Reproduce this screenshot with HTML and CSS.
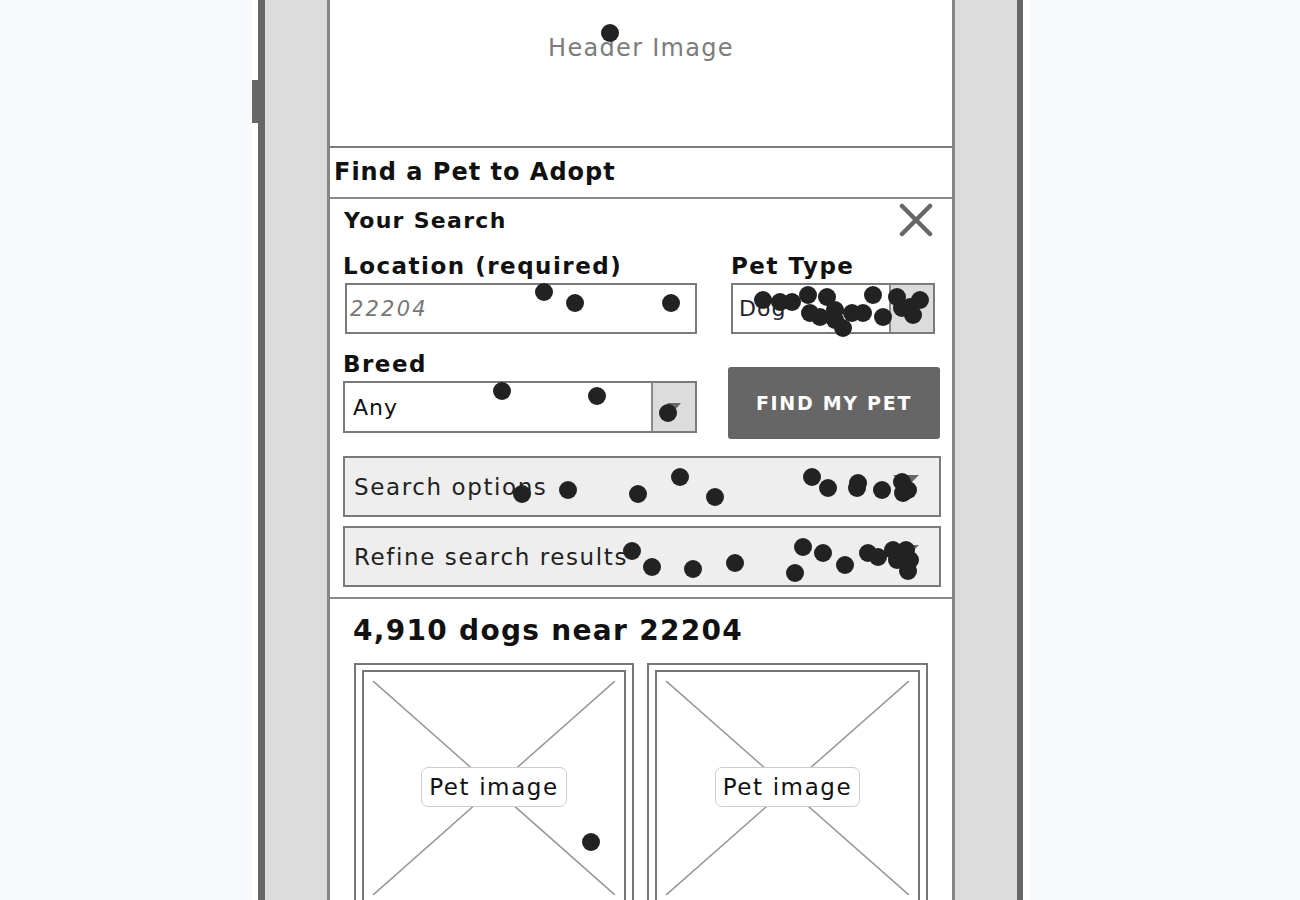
FILE: index.html
```html
<!DOCTYPE html>
<html lang="en">
<head>
  <meta charset="UTF-8" />
  <meta name="viewport" content="width=device-width, initial-scale=1.0"/>
  <title>Find a Pet – click map</title>
  <link rel="stylesheet" href="styles.css">
</head>
<body>
  <div class="device">
    <div class="screen">
      <div class="hero">Header Image</div>
      <div class="title">Find a Pet to Adopt</div>

      <section class="search">
        <div class="search-head">
          <span>Your Search</span>
          <svg class="close" width="34" height="34" viewBox="0 0 34 34">
            <path d="M3 3 L31 31 M31 3 L3 31" stroke="#666" stroke-width="4.5" stroke-linecap="round"/>
          </svg>
        </div>

        <div class="form">
          <div class="field">
            <label>Location (required)</label>
            <div class="input loc">22204</div>
          </div>
          <div class="field right">
            <label>Pet Type</label>
            <div class="select type"><span>Dog</span><i class="drop"></i></div>
          </div>
          <div class="field">
            <label>Breed</label>
            <div class="select"><span>Any</span><i class="drop"></i></div>
          </div>
          <div class="field btn-cell">
            <button class="find">FIND MY PET</button>
          </div>
        </div>

        <div class="bar">Search options<i class="tri"></i></div>
        <div class="bar">Refine search results<i class="tri"></i></div>
      </section>

      <section class="results">
        <h2>4,910 dogs near 22204</h2>
        <div class="cards">
          <div class="card">
            <div class="pic">
              <svg class="cross" viewBox="0 0 256 228" preserveAspectRatio="none">
                <path d="M9 9 L247 219 M247 9 L9 219" stroke="#999" stroke-width="1.5"/>
              </svg>
              <span class="tag">Pet image</span>
            </div>
          </div>
          <div class="card">
            <div class="pic">
              <svg class="cross" viewBox="0 0 256 228" preserveAspectRatio="none">
                <path d="M9 9 L247 219 M247 9 L9 219" stroke="#999" stroke-width="1.5"/>
              </svg>
              <span class="tag">Pet image</span>
            </div>
          </div>
        </div>
      </section>
    </div>
  </div>

  <div id="clicks" class="clicks"></div>

  <script>
    // recorded click positions (page coordinates)
    const clicks = [
      [610, 33],
      [544, 292], [575, 303], [671, 303],
      [763, 300], [780, 302], [792, 302], [808, 295], [827, 297], [810, 313],
      [820, 317], [835, 310], [835, 320], [843, 328], [852, 313], [863, 313],
      [873, 295], [883, 317], [897, 297], [910, 307], [920, 300], [913, 315], [902, 308],
      [502, 391], [597, 396], [668, 413],
      [522, 494], [568, 490], [638, 494], [680, 477], [715, 497],
      [812, 477], [828, 488], [857, 488], [858, 483], [882, 490], [902, 482], [903, 493], [908, 490],
      [632, 551], [652, 567], [693, 569], [735, 563],
      [803, 547], [823, 553], [845, 565], [795, 573], [868, 553], [878, 557],
      [893, 550], [897, 560], [906, 550], [910, 560], [908, 571], [903, 554],
      [591, 842]
    ];
    const layer = document.getElementById('clicks');
    clicks.forEach(([x, y]) => {
      const dot = document.createElement('div');
      dot.className = 'dot';
      dot.style.left = (x - 9) + 'px';
      dot.style.top = (y - 9) + 'px';
      layer.appendChild(dot);
    });
  </script>
</body>
</html>
```

FILE: styles.css
```css
html, body {
  margin: 0;
  height: 100%;
  overflow: hidden;
}
body {
  background: #f8f9fb;
  font-family: "DejaVu Sans", "Open Sans", sans-serif;
  color: #111;
  position: relative;
}

/* device frame */
.device {
  position: relative;
  margin-left: 252px;
  width: 778px;
  min-height: 100vh;
  box-sizing: border-box;
  background: #fff;
  padding: 0 7px 0 6px;
  display: flex;
}
.device::before {
  content: "";
  position: absolute;
  left: 0;
  top: 80px;
  width: 6px;
  height: 43px;
  background: #666;
}
.device::after {
  content: "";
  position: absolute;
  left: 6px;
  right: 7px;
  top: 0;
  bottom: 0;
  border-left: 7px solid #666;
  border-right: 6px solid #666;
  pointer-events: none;
}
.screen {
  flex: 1;
  margin: 0 68px 0 69px;
  background: #fff;
  border-left: 3px solid #858585;
  border-right: 3px solid #858585;
  box-shadow: -62px 0 0 #dcdcdc, 62px 0 0 #dcdcdc;
}

.hero {
  border-bottom: 2px solid #7a7a7a;
  text-align: center;
  color: #7c7c7c;
  font-size: 24px;
  letter-spacing: 1.3px;
  padding-top: 33px;
  box-sizing: border-box;
  height: 148px;
  line-height: 30px;
}
.title {
  height: 51px;
  box-sizing: border-box;
  border-bottom: 2px solid #8a8a8a;
  padding-left: 4px;
  font-weight: 700;
  font-size: 24px;
  letter-spacing: 1px;
  line-height: 48px;
}

/* search panel */
.search {
  padding: 0 11px 10px 13px;
  border-bottom: 2px solid #8a8a8a;
}
.search-head {
  height: 51px;
  display: flex;
  align-items: center;
  justify-content: space-between;
  font-weight: 700;
  font-size: 22px;
  letter-spacing: 1.3px;
  padding-left: 1px;
}
.search-head span {
  margin-top: -8px;
}
.close {
  margin-right: 8px;
  margin-top: -10px;
}
.form {
  display: grid;
  grid-template-columns: 354px 212px;
  column-gap: 31px;
  row-gap: 14px;
}
.field label {
  display: block;
  height: 33px;
  line-height: 33px;
  font-weight: 700;
  font-size: 23px;
  letter-spacing: 1.5px;
}
.field.right {
  padding-left: 3px;
}
.input, .select {
  box-sizing: border-box;
  border: 2px solid #7a7a7a;
  background: #fff;
  height: 51px;
  display: flex;
  align-items: center;
  font-size: 22px;
  letter-spacing: 1px;
}
.input.loc {
  margin-left: 2px;
  padding-left: 3px;
  font-style: italic;
  color: #777;
  font-size: 21px;
  letter-spacing: 2.2px;
}
.select span {
  flex: 1;
  padding-left: 8px;
}
.select.type {
  width: 204px;
}
.select.type span {
  padding-left: 6px;
  color: #223;
}
.drop {
  width: 42px;
  height: 100%;
  background: #dcdcdc;
  border-left: 2px solid #8a8a8a;
  position: relative;
}
.drop::after {
  content: "";
  position: absolute;
  left: 14px;
  top: 20px;
  border-left: 7px solid transparent;
  border-right: 7px solid transparent;
  border-top: 8px solid #666;
}
.field .select:not(.type) {
  height: 52px;
}
.btn-cell {
  padding-top: 19px;
}
.find {
  width: 100%;
  height: 72px;
  border: none;
  border-radius: 3px;
  background: #666;
  color: #fff;
  font-family: inherit;
  font-weight: 700;
  font-size: 19px;
  letter-spacing: 1.7px;
}

.bar {
  margin-top: 17px;
  height: 61px;
  box-sizing: border-box;
  border: 2px solid #7a7a7a;
  background: #eee;
  display: flex;
  align-items: center;
  justify-content: space-between;
  padding: 0 20px 0 9px;
  font-size: 23px;
  letter-spacing: 1.6px;
  color: #222;
}
.bar + .bar {
  margin-top: 9px;
}
.tri {
  border-left: 13px solid transparent;
  border-right: 13px solid transparent;
  border-top: 13px solid #666;
  margin-top: -10px;
}

/* results */
.results {
  padding: 12px 23px 0 24px;
}
.results h2 {
  margin: 0 0 12px -1px;
  font-size: 28px;
  font-weight: 700;
  letter-spacing: 1.3px;
  line-height: 40px;
}
.cards {
  display: grid;
  grid-template-columns: 280px 281px;
  column-gap: 13px;
}
.card {
  border: 2px solid #777;
  padding: 5px 6px 0 6px;
}
.pic {
  position: relative;
  height: 232px;
  border: 2px solid #777;
  display: flex;
  align-items: center;
  justify-content: center;
}
.cross {
  position: absolute;
  left: 0;
  top: 0;
  width: 100%;
  height: 100%;
}
.tag {
  position: relative;
  background: #fff;
  border: 1px solid #ccc;
  border-radius: 7px;
  padding: 0 7px;
  height: 38px;
  line-height: 38px;
  font-size: 23px;
  letter-spacing: 1.6px;
  margin-top: -2px;
}

/* click overlay */
.clicks {
  position: absolute;
  left: 0;
  top: 0;
}
.dot {
  position: absolute;
  width: 18px;
  height: 18px;
  border-radius: 50%;
  background: #222;
}
```
